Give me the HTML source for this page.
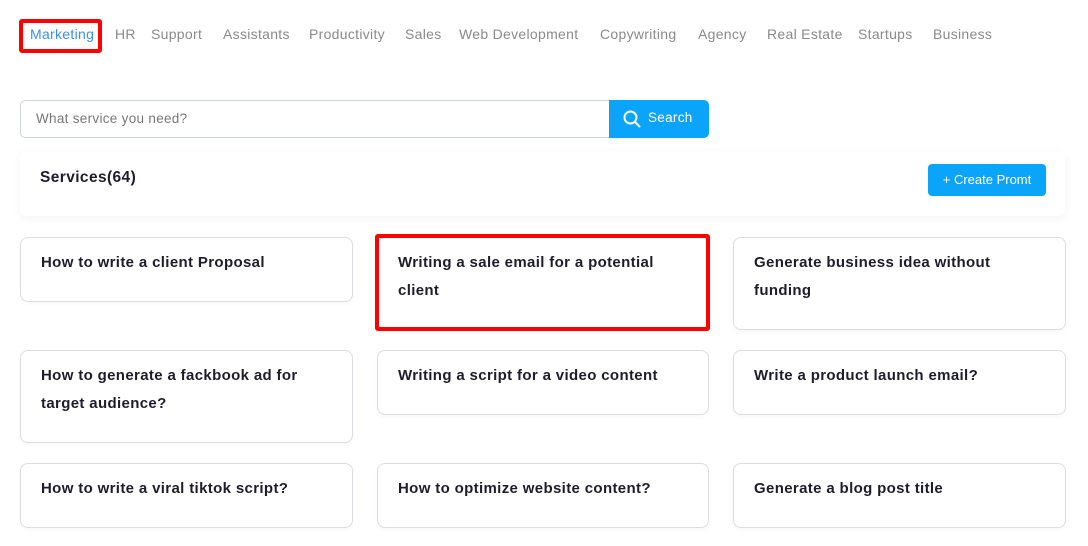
<!DOCTYPE html>
<html><head><style>
*{box-sizing:border-box;margin:0;padding:0}
body{width:1088px;height:546px;background:#fff;font-family:"Liberation Sans",sans-serif;position:relative;overflow:hidden}
.nav{position:absolute;top:26px;font-size:14px;letter-spacing:0.3px;color:#8a8a8a;white-space:nowrap}
.abs{position:absolute}
.card{position:absolute;border:1px solid #dcdde2;border-radius:8px;background:#fff;padding:11px 20px;font-size:15px;letter-spacing:0.35px;font-weight:bold;color:#1f1d2b;line-height:28px;white-space:nowrap;box-shadow:0 2px 4px rgba(0,0,0,.03)}
.red{position:absolute;border:4px solid #f00;border-radius:3px}
</style></head><body>
<div class="red" style="left:19px;top:19px;width:83px;height:34px"></div>
<span class="nav" style="left:30px;color:#3b8ff0">Marketing</span>
<span class="nav" style="left:115px">HR</span>
<span class="nav" style="left:151px">Support</span>
<span class="nav" style="left:223px">Assistants</span>
<span class="nav" style="left:309px">Productivity</span>
<span class="nav" style="left:405px">Sales</span>
<span class="nav" style="left:459px">Web Development</span>
<span class="nav" style="left:600px">Copywriting</span>
<span class="nav" style="left:698px">Agency</span>
<span class="nav" style="left:767px">Real Estate</span>
<span class="nav" style="left:858px">Startups</span>
<span class="nav" style="left:933px">Business</span>

<div class="abs" style="left:20px;top:100px;width:590px;height:38px;border:1px solid #cfd3da;border-radius:5px 0 0 5px;padding:10px 15px;font-size:13.5px;letter-spacing:0.3px;color:#777">What service you need?</div>
<div class="abs" style="left:609px;top:100px;width:100px;height:38px;background:#0aa4fb;border-radius:0 5px 5px 0;color:#fff;font-size:13.5px;letter-spacing:0.3px;padding:10px 0 0 39px">Search</div>
<svg class="abs" style="left:623px;top:110px" width="18" height="18" viewBox="0 0 18 18"><circle cx="7.5" cy="7.5" r="6" fill="none" stroke="#fff" stroke-width="2"/><path d="M12 12l4.5 4.5" stroke="#fff" stroke-width="2" stroke-linecap="round"/></svg>

<div class="abs" style="left:20px;top:152px;width:1045px;height:64px;background:#fff;border-radius:6px;box-shadow:0 2px 10px rgba(0,0,0,.05)"></div>
<div class="abs" style="left:40px;top:169px;font-size:15.5px;letter-spacing:0.4px;font-weight:bold;color:#1f1d2b">Services(64)</div>
<div class="abs" style="left:928px;top:164px;width:118px;height:32px;background:#0aa4fb;border-radius:4px;color:#fff;font-size:13px;text-align:center;line-height:32px">+ Create Promt</div>

<div class="card" style="left:20px;top:237px;width:333px;height:65px">How to write a client Proposal</div>
<div class="card" style="left:377px;top:237px;width:332px;height:92px">Writing a sale email for a potential<br>client</div>
<div class="red" style="left:375px;top:234px;width:335px;height:97px"></div>
<div class="card" style="left:733px;top:237px;width:333px;height:93px">Generate business idea without<br>funding</div>

<div class="card" style="left:20px;top:350px;width:333px;height:93px">How to generate a fackbook ad for<br>target audience?</div>
<div class="card" style="left:377px;top:350px;width:332px;height:65px">Writing a script for a video content</div>
<div class="card" style="left:733px;top:350px;width:333px;height:65px">Write a product launch email?</div>

<div class="card" style="left:20px;top:463px;width:333px;height:65px">How to write a viral tiktok script?</div>
<div class="card" style="left:377px;top:463px;width:332px;height:65px">How to optimize website content?</div>
<div class="card" style="left:733px;top:463px;width:333px;height:65px">Generate a blog post title</div>
</body></html>
